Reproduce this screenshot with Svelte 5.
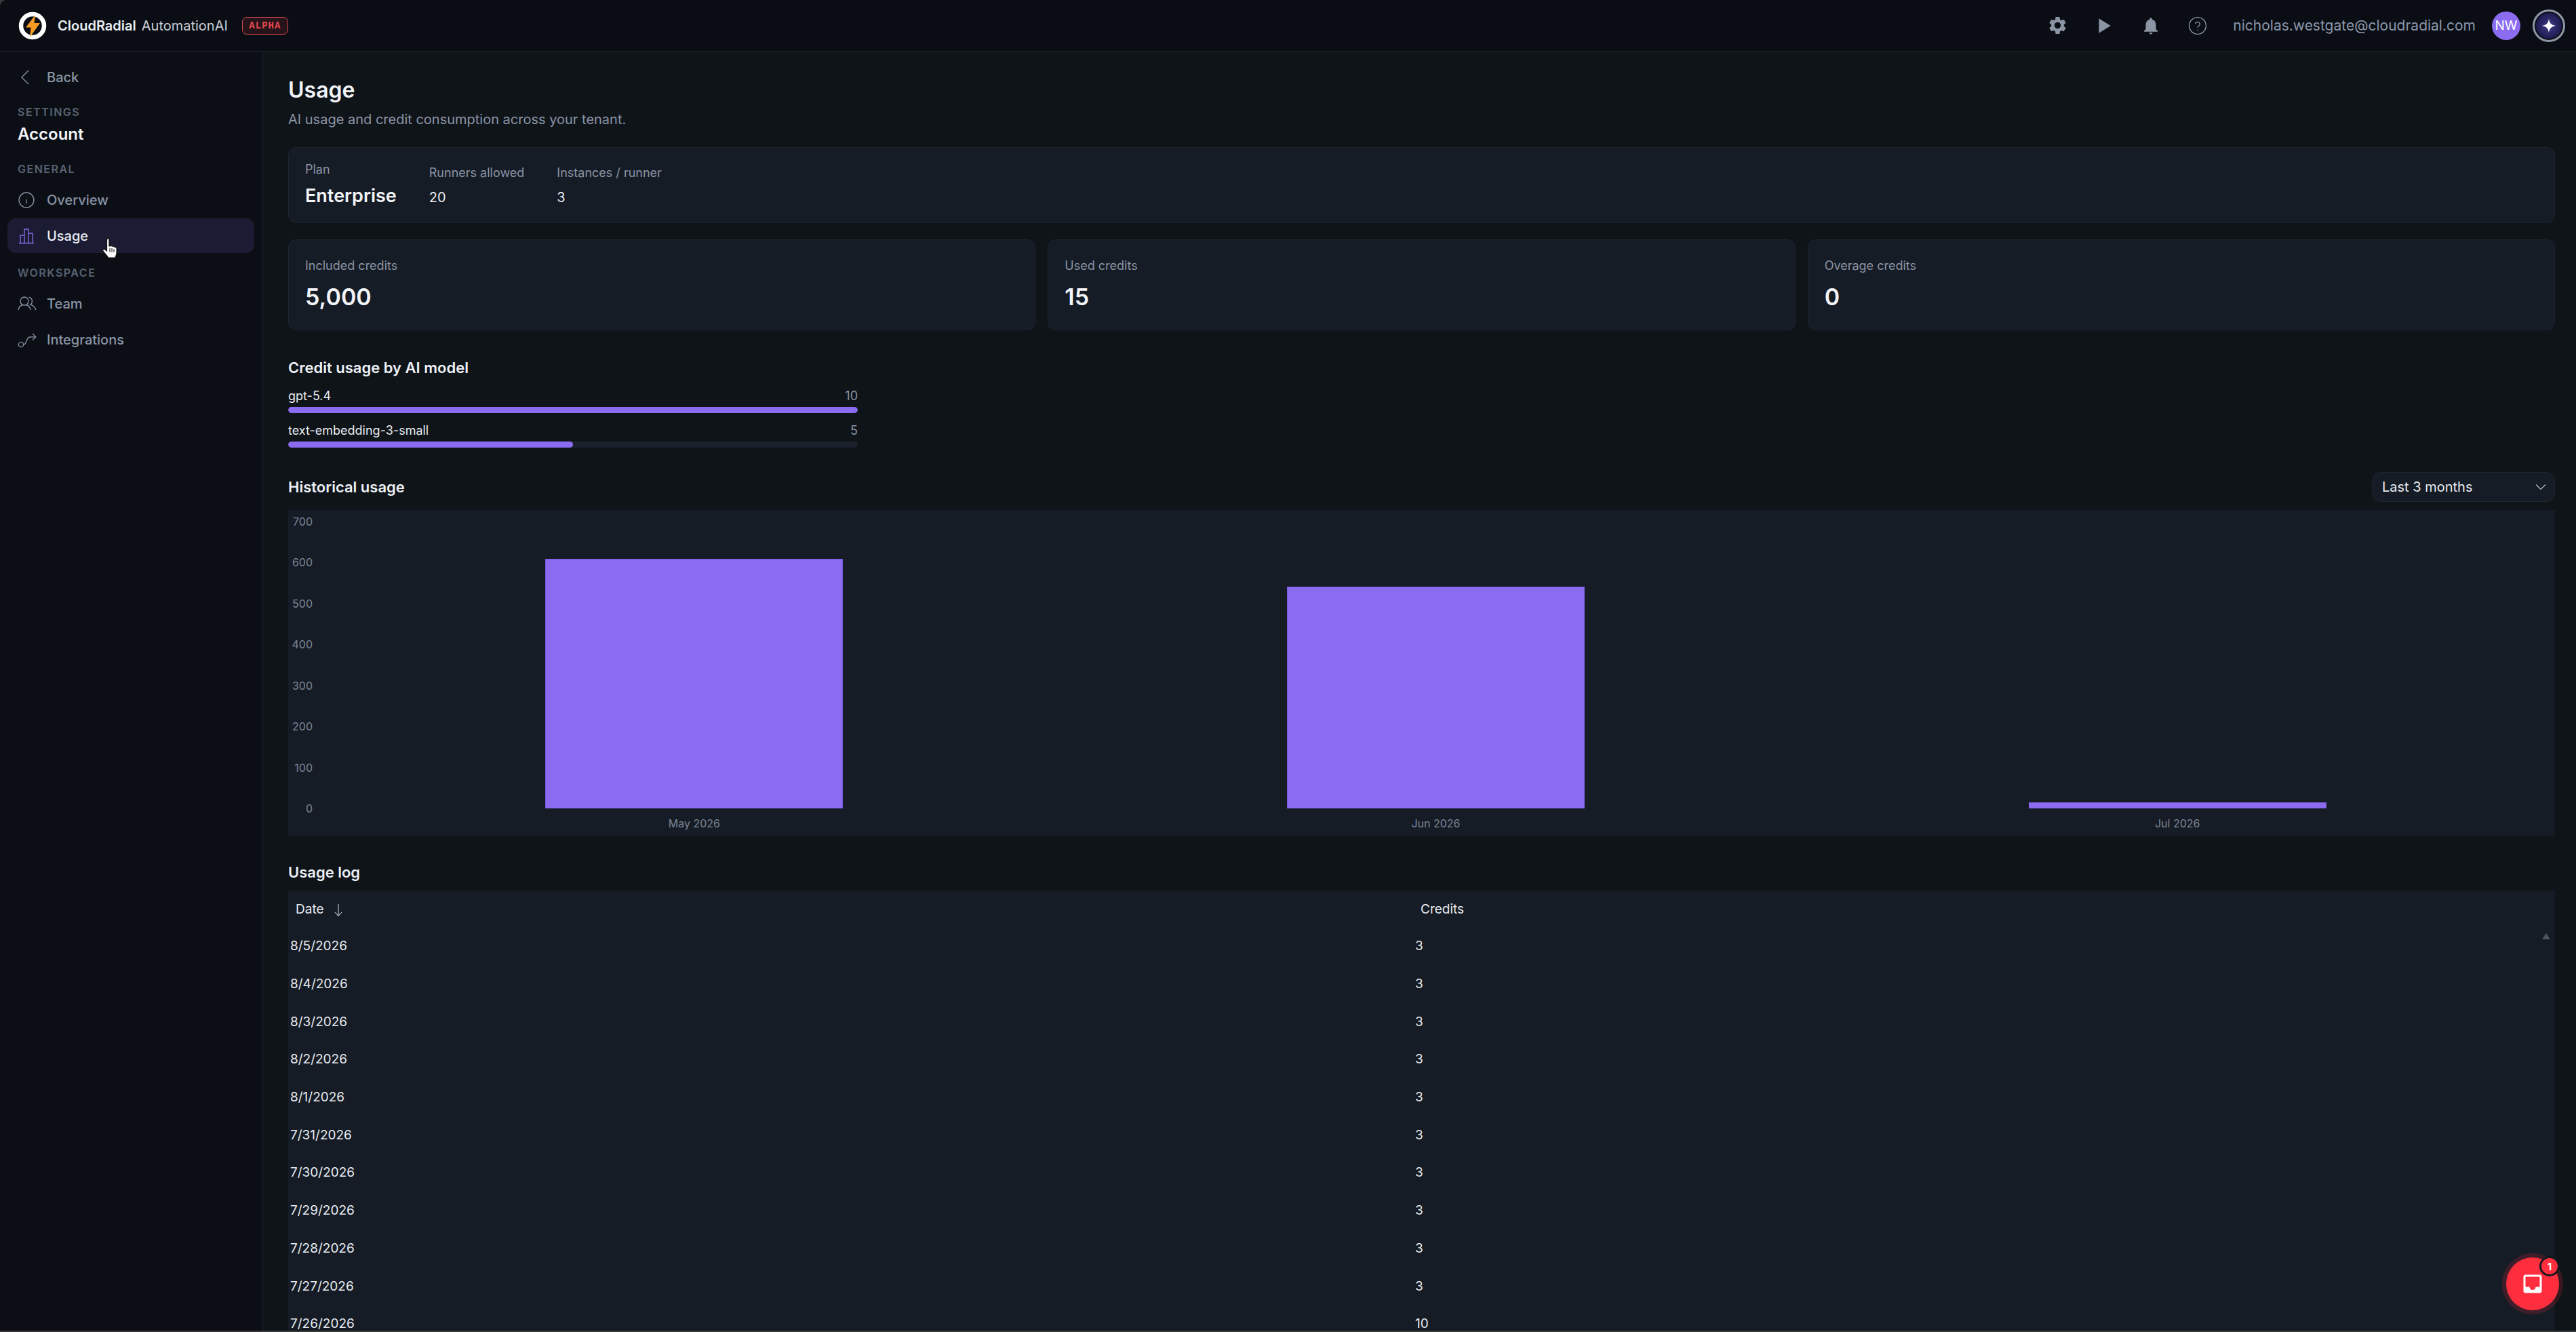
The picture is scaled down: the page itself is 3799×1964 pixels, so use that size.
<script>
  const models = [
    { name: 'gpt-5.4', value: 10 },
    { name: 'text-embedding-3-small', value: 5 }
  ];
  const maxModel = 10;

  const stats = [
    { label: 'Included credits', value: '5,000' },
    { label: 'Used credits', value: '15' },
    { label: 'Overage credits', value: '0' }
  ];

  const months = [
    { label: 'May 2026', value: 609 },
    { label: 'Jun 2026', value: 541 },
    { label: 'Jul 2026', value: 15 }
  ];
  const ticks = [700, 600, 500, 400, 300, 200, 100, 0];
  const plotHeight = 423;

  const log = [
    ['8/5/2026', 3], ['8/4/2026', 3], ['8/3/2026', 3], ['8/2/2026', 3], ['8/1/2026', 3],
    ['7/31/2026', 3], ['7/30/2026', 3], ['7/29/2026', 3], ['7/28/2026', 3], ['7/27/2026', 3],
    ['7/26/2026', 10]
  ];
</script>

<div class="app">
  <header>
    <div class="brand">
      <svg class="logo" viewBox="0 0 42 42">
        <circle cx="21" cy="21" r="17" fill="#0a0e14" stroke="#fff" stroke-width="6.5" />
        <path d="M25 5 L11 23.5 H18.5 L17 38 L32 17 H23.5 Z" fill="#f59a23" />
      </svg>
      <span class="name">CloudRadial</span>
      <span class="product">AutomationAI</span>
      <span class="alpha">ALPHA</span>
    </div>
    <div class="actions">
      <svg class="act gear" viewBox="0 0 24 24"><path d="M19.14 12.94c.04-.3.06-.61.06-.94 0-.32-.02-.64-.07-.94l2.03-1.58c.18-.14.23-.41.12-.61l-1.92-3.32c-.12-.22-.37-.29-.59-.22l-2.39.96c-.5-.38-1.03-.7-1.62-.94l-.36-2.54c-.04-.24-.24-.41-.48-.41h-3.84c-.24 0-.43.17-.47.41l-.36 2.54c-.59.24-1.13.57-1.62.94l-2.39-.96c-.22-.08-.47 0-.59.22L2.74 8.87c-.12.21-.08.47.12.61l2.03 1.58c-.05.3-.09.63-.09.94s.02.64.07.94l-2.03 1.58c-.18.14-.23.41-.12.61l1.92 3.32c.12.22.37.29.59.22l2.39-.96c.5.38 1.03.7 1.62.94l.36 2.54c.05.24.24.41.48.41h3.84c.24 0 .44-.17.47-.41l.36-2.54c.59-.24 1.13-.56 1.62-.94l2.39.96c.22.08.47 0 .59-.22l1.92-3.32c.12-.22.07-.47-.12-.61l-2.01-1.58zM12 15.6c-1.98 0-3.6-1.62-3.6-3.6s1.62-3.6 3.6-3.6 3.6 1.62 3.6 3.6-1.62 3.6-3.6 3.6z" /></svg>
      <svg class="act play" viewBox="0 0 24 24"><path d="M5 2 L21 12 L5 22 Z" /></svg>
      <svg class="act bell" viewBox="0 0 24 24"><path d="M12 22c1.1 0 2-.9 2-2h-4c0 1.1.9 2 2 2zm6-6v-5c0-3.07-1.63-5.64-4.5-6.32V4c0-.83-.67-1.5-1.5-1.5s-1.5.67-1.5 1.5v.68C7.64 5.36 6 7.92 6 11v5l-2 2v1h16v-1l-2-2z" /></svg>
      <svg class="help" viewBox="0 0 24 24">
        <circle cx="12" cy="12" r="10.6" />
        <path d="M9 9.4a3 3 0 0 1 5.9.6c0 2-2.9 2.4-2.9 4.4" />
        <path d="M12 17 V17.9" />
      </svg>
      <span class="email">nicholas.westgate@cloudradial.com</span>
      <span class="avatar">NW</span>
      <span class="spark">
        <svg viewBox="0 0 24 24"><path d="M12 2.5 C12.8 8.5 15.5 11.2 21.5 12 C15.5 12.8 12.8 15.5 12 21.5 C11.2 15.5 8.5 12.8 2.5 12 C8.5 11.2 11.2 8.5 12 2.5 Z" fill="#fff" /></svg>
      </span>
    </div>
  </header>

  <div class="body">
    <aside>
      <a class="back" href="#back">
        <svg class="ico" viewBox="0 0 26 26"><path d="M16 3 L6 13 L16 23" /></svg>
        <span>Back</span>
      </a>
      <div class="eyebrow settings">SETTINGS</div>
      <div class="account">Account</div>

      <div class="eyebrow general">GENERAL</div>
      <a class="item" href="#overview">
        <svg class="ico" viewBox="0 0 26 26"><circle cx="13" cy="13" r="11" /><path d="M13 12 V18.5 M13 8 V8.8" /></svg>
        <span>Overview</span>
      </a>
      <a class="item active" href="#usage">
        <svg class="ico" viewBox="0 0 26 26"><path d="M2 23.5 H24 M4 23.5 V12 H10 V23.5 M10 23.5 V3 H16 V23.5 M16 23.5 V9 H22 V23.5" /></svg>
        <span>Usage</span>
      </a>

      <div class="eyebrow workspace">WORKSPACE</div>
      <a class="item" href="#team">
        <svg class="ico wide" viewBox="0 0 28 26"><circle cx="10" cy="9" r="6" /><path d="M1 22 C2 16.5 5.5 15 7.5 14.5 M12.5 14.5 C14.5 15 18 16.5 19 22 M16.5 3.2 A6 6 0 0 1 18.5 14.2 C22 15 25.5 17.5 27 22" /></svg>
        <span>Team</span>
      </a>
      <a class="item" href="#integrations">
        <svg class="ico wide" viewBox="0 0 28 26"><circle cx="5" cy="20" r="3.6" /><path d="M8.6 20 C14 20 12 10 18 9 C20 8.7 23 8.7 26.5 8.7 M22 4 L26.8 8.7 L22 13.4" /></svg>
        <span>Integrations</span>
      </a>

      <svg class="cursor" viewBox="0 0 24 32">
        <path d="M8 2 C9 1 11 1 11 3 V13 L13 12.5 L16 13 L19 14 L22 15.5 V24 L20 30 H10 L2 20 C1 18 3 16.5 5 18 L7.5 20 V4 Z" fill="#fff" stroke="#111" stroke-width="1.2" />
        <path d="M12 16 V22 M15 16 V22 M18 17 V22" stroke="#111" stroke-width="1" />
      </svg>
    </aside>

    <main>
      <h1>Usage</h1>
      <p class="sub">AI usage and credit consumption across your tenant.</p>

      <section class="card plan">
        <div>
          <div class="label">Plan</div>
          <div class="plan-name">Enterprise</div>
        </div>
        <div>
          <div class="label">Runners allowed</div>
          <div class="plan-val">20</div>
        </div>
        <div>
          <div class="label">Instances / runner</div>
          <div class="plan-val">3</div>
        </div>
      </section>

      <section class="stats">
        {#each stats as s}
          <div class="card stat">
            <div class="label">{s.label}</div>
            <div class="stat-val">{s.value}</div>
          </div>
        {/each}
      </section>

      <h2 class="by-model">Credit usage by AI model</h2>
      <div class="models">
        {#each models as m}
          <div class="model">
            <div class="model-row"><span>{m.name}</span><span class="num">{m.value}</span></div>
            <div class="track"><div class="fill" style="width: {(m.value / maxModel) * 100}%"></div></div>
          </div>
        {/each}
      </div>

      <div class="hist-head">
        <h2>Historical usage</h2>
        <div class="select">
          <span>Last 3 months</span>
          <svg viewBox="0 0 16 10"><path d="M1 1.5 L8 8.5 L15 1.5" /></svg>
        </div>
      </div>

      <section class="chart">
        <div class="yaxis">
          {#each ticks as t}<span>{t}</span>{/each}
        </div>
        <div class="plot">
          <div class="bars">
            {#each months as m}
              <div class="col"><div class="bar" style="height: {Math.round((m.value / 700) * plotHeight)}px"></div></div>
            {/each}
          </div>
          <div class="xaxis">
            {#each months as m}<span>{m.label}</span>{/each}
          </div>
        </div>
      </section>

      <h2 class="log-title">Usage log</h2>
      <section class="table">
        <div class="thead">
          <div class="th-date">
            <span>Date</span>
            <svg viewBox="0 0 14 20"><path d="M7 1 V18 M2 13 L7 18.5 L12 13" /></svg>
          </div>
          <div>Credits</div>
        </div>
        {#each log as [date, credits]}
          <div class="row"><div>{date}</div><div>{credits}</div></div>
        {/each}
        <span class="scroll-up"></span>
      </section>
    </main>
  </div>

  <button class="fab" aria-label="Inbox">
    <svg viewBox="0 0 24 24"><path d="M19 3H5c-1.1 0-2 .9-2 2v14c0 1.1.9 2 2 2h14c1.1 0 2-.9 2-2V5c0-1.1-.9-2-2-2zm0 12h-4c0 1.66-1.35 3-3 3s-3-1.34-3-3H5V5h14v10z" /></svg>
    <span class="badge">1</span>
  </button>
</div>

<style>
:global(body) {
  margin: 0;
  background: #3a3a3a;
}

.app {
  position: relative;
  height: 1962px;
  overflow: hidden;
  display: flex;
  flex-direction: column;
  background: #0f1419;
  color: #e8ecf2;
  font-family: Inter, "Liberation Sans", sans-serif;
  border-top-left-radius: 10px;
}

header {
  height: 75px;
  flex: none;
  display: flex;
  align-items: flex-start;
  justify-content: space-between;
  background: #0a0e14;
  border-bottom: 1px solid #1c222d;
  padding: 0 16px 0 27px;
}

.brand,
.actions {
  height: 75px;
  display: flex;
  align-items: center;
}

.logo {
  width: 42px;
  height: 42px;
}

.name {
  margin-left: 16px;
  font-size: 20px;
  font-weight: 600;
  color: #e9edf3;
}

.product {
  margin-left: 8px;
  font-size: 20px;
  color: #c9ced7;
}

.alpha {
  margin-left: 21px;
  height: 24px;
  line-height: 24px;
  padding: 0 9.5px;
  border: 1px solid #d9484d;
  border-radius: 7px;
  background: #26141a;
  color: #e5484d;
  font-family: "Liberation Mono", monospace;
  font-size: 14px;
  font-weight: 700;
  letter-spacing: 1px;
}

.act {
  display: block;
  fill: #8b94a3;
}

.gear {
  width: 31px;
  height: 31px;
}

.play {
  width: 26px;
  height: 26px;
  margin-left: 40px;
}

.bell {
  width: 30px;
  height: 30px;
  margin-left: 41px;
}

.help {
  width: 28px;
  height: 28px;
  margin-left: 40px;
  fill: none;
  stroke: #8b94a3;
  stroke-width: 1.2;
}

.email {
  margin-left: 38px;
  font-size: 21px;
  color: #8b97ad;
}

.avatar {
  margin-left: 24px;
  width: 42px;
  height: 42px;
  border-radius: 50%;
  background: #8b6cf0;
  color: #fff;
  font-size: 19px;
  display: grid;
  place-items: center;
}

.spark {
  margin-left: 18px;
  width: 38px;
  height: 38px;
  border: 3px solid #8d97a6;
  border-radius: 50%;
  background: radial-gradient(circle, #3f3a86 0%, #1c1a4e 65%, #14143a 100%);
  background-clip: content-box;
  padding: 2px;
  box-sizing: content-box;
  display: grid;
  place-items: center;
}

.spark svg {
  width: 26px;
  height: 26px;
}

.body {
  flex: 1;
  min-height: 0;
  display: flex;
}

aside {
  position: relative;
  width: 388px;
  flex: none;
  box-sizing: border-box;
  background: #0b0f15;
  border-right: 1px solid #1c222d;
}

a {
  text-decoration: none;
  color: #8a94a6;
}

.back,
.item {
  display: flex;
  align-items: center;
  font-size: 20px;
  font-weight: 500;
  height: 51px;
  margin: 0 12px 0 11px;
  border-radius: 12px;
}

.back {
  margin-top: 12px;
}

.ico {
  width: 26px;
  height: 26px;
  margin-left: 15px;
  margin-right: 17px;
  fill: none;
  stroke: #8a94a6;
  stroke-width: 1.3;
  flex: none;
}

.ico.wide {
  width: 28px;
  margin-left: 15px;
  margin-right: 15px;
}

.item.active {
  background: #1b1c33;
  color: #e8ecf2;
}

.active .ico {
  stroke: #8b6cf0;
}

.eyebrow {
  margin-left: 26px;
  font-size: 16px;
  font-weight: 600;
  letter-spacing: 1.5px;
  line-height: 20px;
  color: #5a6373;
}

.settings {
  margin-top: 16px;
}

.account {
  margin: 8px 0 0 26px;
  font-size: 24px;
  font-weight: 600;
  line-height: 30px;
  color: #f2f4f8;
}

.general {
  margin-top: 26px;
  margin-bottom: 10px;
}

.workspace {
  margin-top: 19px;
  margin-bottom: 10px;
}

.item + .item {
  margin-top: 2px;
}

.cursor {
  position: absolute;
  left: 150px;
  top: 274px;
  width: 24px;
  height: 32px;
}

main {
  flex: 1;
  min-width: 0;
  padding: 37px 31px 0 37px;
}

h1 {
  margin: 0;
  font-size: 32px;
  font-weight: 600;
  line-height: 40px;
  color: #f2f4f8;
}

.sub {
  margin: 9px 0 27px;
  font-size: 20px;
  line-height: 28px;
  color: #8a94a6;
}

.card {
  box-sizing: border-box;
  background: #161c25;
  border: 1px solid #1e2531;
  border-radius: 12px;
  padding: 0 24px;
}

.label {
  font-size: 18px;
  line-height: 24px;
  color: #8a94a6;
}

.plan {
  height: 112px;
  padding-top: 20px;
  display: flex;
  gap: 48px;
  align-items: flex-start;
}

.plan > div:nth-child(n + 2) {
  padding-top: 5px;
}

.plan-name {
  margin-top: 11px;
  font-size: 27px;
  font-weight: 600;
  line-height: 32px;
  color: #f2f4f8;
}

.plan-val {
  margin-top: 10px;
  font-size: 20px;
  line-height: 28px;
  color: #e8ecf2;
}

.stats {
  margin-top: 24px;
  display: grid;
  grid-template-columns: repeat(3, 1fr);
  gap: 18px;
}

.stat {
  height: 134px;
  padding-top: 26px;
}

.stat-val {
  margin-top: 14px;
  font-size: 34px;
  font-weight: 600;
  line-height: 40px;
  color: #f2f4f8;
}

h2 {
  margin: 0;
  font-size: 22px;
  font-weight: 600;
  line-height: 28px;
  color: #eef1f6;
}

.by-model {
  margin-top: 41px;
}

.models {
  width: 840px;
  margin-top: 16px;
}

.model + .model {
  margin-top: 14px;
}

.model-row {
  display: flex;
  justify-content: space-between;
  font-size: 18px;
  line-height: 24px;
  color: #e8ecf2;
}

.num {
  color: #8a94a6;
}

.track {
  margin-top: 4px;
  height: 9px;
  border-radius: 5px;
  background: #1b212c;
  overflow: hidden;
}

.fill {
  height: 100%;
  border-radius: 5px;
  background: #8b6cf0;
}

.hist-head {
  margin-top: 36px;
  height: 44px;
  display: flex;
  align-items: center;
  justify-content: space-between;
}

.select {
  width: 270px;
  height: 44px;
  box-sizing: border-box;
  padding: 0 12px 0 14px;
  display: flex;
  align-items: center;
  justify-content: space-between;
  background: #161c25;
  border: 1px solid #1e2531;
  border-radius: 12px;
  font-size: 20px;
  color: #e8ecf2;
}

.select svg {
  width: 16px;
  height: 10px;
  fill: none;
  stroke: #b9c0cb;
  stroke-width: 1.2;
}

.chart {
  margin-top: 12px;
  height: 480px;
  box-sizing: border-box;
  padding: 7px 10px 0 0;
  display: flex;
  background: #161c25;
}

.yaxis {
  width: 36px;
  height: 443px;
  flex: none;
  display: flex;
  flex-direction: column;
  justify-content: space-between;
  align-items: flex-end;
  font-size: 16px;
  line-height: 20px;
  color: #7c8696;
}

.plot {
  flex: 1;
  margin-left: 16px;
}

.bars {
  margin-top: 10px;
  height: 423px;
  display: grid;
  grid-template-columns: repeat(3, 1fr);
}

.col {
  display: flex;
  align-items: flex-end;
  justify-content: center;
}

.bar {
  width: 439px;
  box-sizing: border-box;
  background: #8b6cf0;
  border: 1px solid #7a5cdc;
}

.xaxis {
  margin-top: 12px;
  display: grid;
  grid-template-columns: repeat(3, 1fr);
  text-align: center;
  font-size: 16px;
  line-height: 20px;
  color: #7c8696;
}

.log-title {
  margin-top: 40px;
}

.table {
  position: relative;
  margin-top: 13px;
  background: #161c25;
  font-size: 19px;
}

.thead {
  height: 54px;
  display: grid;
  grid-template-columns: 1670px 1fr;
  align-items: center;
  font-size: 19px;
  color: #e8ecf2;
}

.th-date {
  display: flex;
  align-items: center;
  gap: 14px;
  padding-left: 11px;
}

.th-date svg {
  width: 14px;
  height: 20px;
  margin-top: 3px;
  fill: none;
  stroke: #c4cad4;
  stroke-width: 1.1;
}

.row {
  height: 55.7px;
  display: grid;
  grid-template-columns: 1659px 1fr;
  align-items: center;
  padding-left: 3px;
  color: #e8ecf2;
}

.scroll-up {
  position: absolute;
  top: 63px;
  right: 7px;
  width: 0;
  height: 0;
  border-left: 6px solid transparent;
  border-right: 6px solid transparent;
  border-bottom: 9px solid #50545c;
}

.fab {
  position: absolute;
  left: 3696px;
  top: 1854px;
  width: 78px;
  height: 78px;
  padding: 0;
  border: none;
  border-radius: 50%;
  background: #ff2e3e;
  box-shadow: 0 0 0 6px rgba(255, 46, 62, 0.18);
  display: grid;
  place-items: center;
}

.fab svg {
  width: 36px;
  height: 36px;
  fill: #fff;
}

.badge {
  position: absolute;
  right: -1px;
  top: -2px;
  width: 24px;
  height: 24px;
  border: 3px solid #14181f;
  border-radius: 50%;
  background: #ff2e3e;
  color: #fff;
  font-family: Inter, sans-serif;
  font-size: 15px;
  font-weight: 700;
  display: grid;
  place-items: center;
}
</style>
